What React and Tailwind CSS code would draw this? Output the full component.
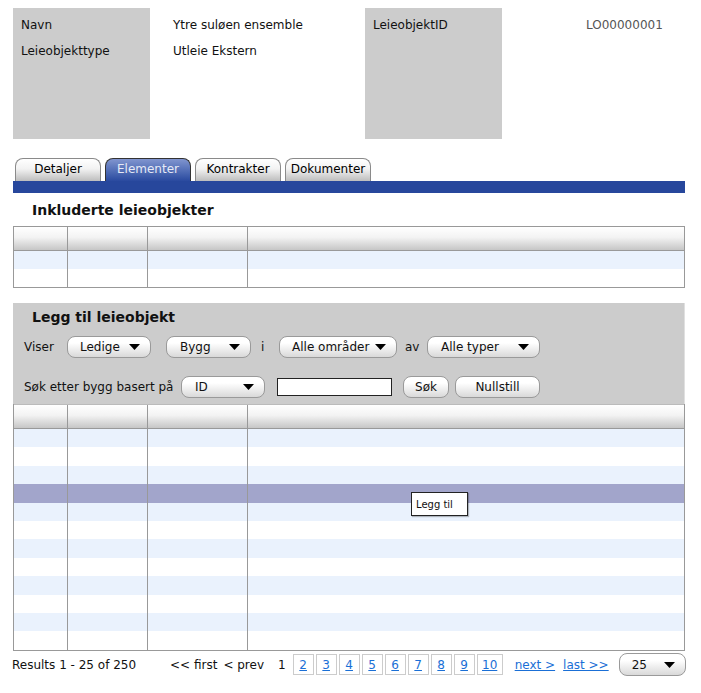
import React from "react";

const Caret = () => (
  <svg width="11" height="6" viewBox="0 0 11 6" className="shrink-0">
    <path d="M0 0h11L5.5 6z" fill="#000" />
  </svg>
);

const Select = ({ label, className }) => (
  <div
    className={`flex items-center justify-between h-[22px] rounded-[8px] border border-[#9a9a9a] bg-linear-to-b from-white from-30% to-[#d9d9d9] pl-[12px] pr-[10px] ${className}`}
  >
    <span>{label}</span>
    <Caret />
  </div>
);

const Button = ({ label, className }) => (
  <div
    className={`flex items-center justify-center h-[22px] rounded-[8px] border border-[#9a9a9a] bg-linear-to-b from-white from-30% to-[#d9d9d9] ${className}`}
  >
    {label}
  </div>
);

const HeaderRow = () => (
  <div className="flex h-[24px] border-b border-[#999] bg-[linear-gradient(to_bottom,#ffffff,#f3f3f3_45%,#c6c6c6)]">
    <div className="w-[54px] border-r border-[#999]" />
    <div className="w-[80px] border-r border-[#999]" />
    <div className="w-[100px] border-r border-[#999]" />
    <div className="flex-1" />
  </div>
);

const Row = ({ bg, h }) => (
  <div className={`flex ${h} ${bg}`}>
    <div className="w-[54px] border-r border-[#999]" />
    <div className="w-[80px] border-r border-[#999]" />
    <div className="w-[100px] border-r border-[#999]" />
    <div className="flex-1" />
  </div>
);

const Tab = ({ label, active }) => (
  <div
    className={`w-[86px] h-[23px] pb-[2px] flex items-center justify-center rounded-t-[8px] border border-b-0 ${
      active
        ? "border-[#333] bg-linear-to-b from-[#8195cf] to-[#2a4a9f] text-[#e6eaf6]"
        : "border-[#8a8a8a] bg-[linear-gradient(to_bottom,#ffffff,#f2f2f2_45%,#bdbdbd)] text-black"
    }`}
  >
    {label}
  </div>
);

const rowColors = [
  "bg-[#eaf2fd]",
  "bg-white",
  "bg-[#eaf2fd]",
  "bg-[#a2a5cb]",
  "bg-[#eaf2fd]",
  "bg-white",
  "bg-[#eaf2fd]",
  "bg-white",
  "bg-[#eaf2fd]",
  "bg-white",
  "bg-[#eaf2fd]",
  "bg-white",
];

const pages = ["2", "3", "4", "5", "6", "7", "8", "9"];

export default function App() {
  return (
    <div className="w-[701px] h-[693px] bg-white text-[12px] text-[#111] font-['DejaVu_Sans',sans-serif] relative overflow-hidden">
      {/* Toppinfo */}
      <div className="flex pt-[8px] pl-[13px]">
        <div className="w-[137px] h-[131px] bg-[#cccccc] pl-[8px] pt-[9px] flex flex-col gap-[10px] leading-[16px]">
          <span>Navn</span>
          <span>Leieobjekttype</span>
        </div>
        <div className="w-[215px] pl-[23px] pt-[9px] flex flex-col gap-[10px] leading-[16px]">
          <span>Ytre suløen ensemble</span>
          <span>Utleie Ekstern</span>
        </div>
        <div className="w-[137px] h-[131px] bg-[#cccccc] pl-[8px] pt-[9px] leading-[16px]">
          LeieobjektID
        </div>
        <div className="pl-[84px] pt-[9px] leading-[16px] text-[#555]">LO00000001</div>
      </div>

      {/* Faner */}
      <div className="mt-[19px] ml-[15px] flex gap-[4px]">
        <Tab label="Detaljer" />
        <Tab label="Elementer" active />
        <Tab label="Kontrakter" />
        <Tab label="Dokumenter" />
      </div>
      <div className="mx-[13px] w-[672px] h-[12px] bg-[#27479c]" />

      {/* Inkluderte */}
      <div className="mt-[8px] ml-[32px] font-bold text-[14px] leading-[18px]">
        Inkluderte leieobjekter
      </div>
      <div className="mt-[7px] mx-[13px] w-[672px] border border-[#999]">
        <HeaderRow />
        <Row bg="bg-[#eaf2fd]" h="h-[18px]" />
        <Row bg="bg-white" h="h-[18px]" />
      </div>

      {/* Legg til */}
      <div className="mt-[15px] mx-[13px] w-[672px] bg-[#cccccc] border-r border-[#e0e0e0] pt-[5px] pb-[6px]">
        <div className="ml-[19px] font-bold text-[14px] leading-[18px]">Legg til leieobjekt</div>
        <div className="mt-[10px] flex items-center pl-[11px]">
          <span className="w-[43px]">Viser</span>
          <Select label="Ledige" className="w-[84px]" />
          <Select label="Bygg" className="w-[85px] ml-[15px] pl-[13px]" />
          <span className="ml-[10px] w-[18px]">i</span>
          <Select label="Alle områder" className="w-[118px] pl-[12px] pr-[6px]" />
          <span className="ml-[8px] w-[22px]">av</span>
          <Select label="Alle typer" className="w-[113px] pl-[13px]" />
        </div>
        <div className="mt-[18px] flex items-center pl-[11px]">
          <span className="w-[157px]">Søk etter bygg basert på</span>
          <Select label="ID" className="w-[84px] pl-[13px]" />
          <div className="ml-[12px] w-[115px] h-[18px] bg-white border border-[#222]" />
          <Button label="Søk" className="ml-[11px] w-[46px]" />
          <Button label="Nullstill" className="ml-[6px] w-[85px]" />
        </div>
      </div>

      {/* Resultattabell */}
      <div className="mx-[13px] w-[672px] border border-[#999] border-t-0 relative">
        <div className="border-t border-[#bbb]">
          <HeaderRow />
        </div>
        {rowColors.map((bg, i) => (
          <Row key={i} bg={bg} h="h-[18.4px]" />
        ))}
        <div className="absolute left-[397px] top-[88px] w-[57px] h-[24px] bg-white border border-[#222] text-[10px] flex items-center pl-[4px] shadow-[1px_1px_1px_rgba(0,0,0,0.25)]">
          Legg til
        </div>
      </div>

      {/* Paginering */}
      <div className="mt-[3px] flex items-center h-[22px] pl-[12px]">
        <span className="w-[158px]">Results 1 - 25 of 250</span>
        <span>&lt;&lt; first</span>
        <span className="ml-[6px]">&lt; prev</span>
        <span className="ml-[14px]">1</span>
        <div className="ml-[7px] flex gap-[2px]">
          {pages.map((p) => (
            <a
              key={p}
              className="w-[21px] h-[21px] border border-[#ccc] flex items-center justify-center text-[#1a6fd6] underline"
            >
              {p}
            </a>
          ))}
          <a className="w-[26px] h-[21px] border border-[#ccc] flex items-center justify-center text-[#1a6fd6] underline">
            10
          </a>
        </div>
        <a className="ml-[12px] text-[#1a6fd6] underline">next &gt;</a>
        <a className="ml-[8px] text-[#1a6fd6] underline">last &gt;&gt;</a>
        <Select label="25" className="ml-[10px] w-[67px] h-[23px] pl-[12px] pr-[9px]" />
      </div>
    </div>
  );
}
